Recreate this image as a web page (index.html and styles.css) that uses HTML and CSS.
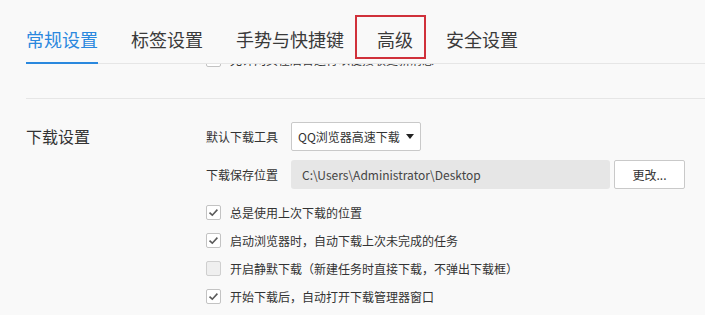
FILE: index.html
```html
<!DOCTYPE html>
<html lang="zh-CN">
<head>
<meta charset="utf-8">
<link rel="stylesheet" href="styles.css">
</head>
<body>
<div class="header">
  <div class="tab active">常规设置</div>
  <div class="tab">标签设置</div>
  <div class="tab">手势与快捷键</div>
  <div class="tab marked">高级</div>
  <div class="tab">安全设置</div>
</div>
<div class="viewport">
  <div class="page">
    <div class="section prev">
      <div class="section-title"></div>
      <div class="section-body">
        <label class="check-row">
          <span class="box"></span>
          <span class="check-text">允许网页在后台运行以便接收更新消息</span>
        </label>
      </div>
    </div>
    <div class="section download">
      <div class="section-title">下载设置</div>
      <div class="section-body">
        <div class="field-row">
          <span class="field-label">默认下载工具</span>
          <div class="select">QQ浏览器高速下载<span class="caret"></span></div>
        </div>
        <div class="field-row">
          <span class="field-label">下载保存位置</span>
          <div class="path">C:\Users\Administrator\Desktop</div>
          <div class="button">更改...</div>
        </div>
        <div class="checks">
          <label class="check-row">
            <span class="box checked"><svg viewBox="0 0 15 15" width="15" height="15"><polyline points="3.5,7.6 6.3,10.2 11.4,4.6" fill="none" stroke="#5a5a5a" stroke-width="1.6"/></svg></span>
            <span class="check-text">总是使用上次下载的位置</span>
          </label>
          <label class="check-row">
            <span class="box checked"><svg viewBox="0 0 15 15" width="15" height="15"><polyline points="3.5,7.6 6.3,10.2 11.4,4.6" fill="none" stroke="#5a5a5a" stroke-width="1.6"/></svg></span>
            <span class="check-text">启动浏览器时，自动下载上次未完成的任务</span>
          </label>
          <label class="check-row">
            <span class="box off"></span>
            <span class="check-text">开启静默下载（新建任务时直接下载，不弹出下载框）</span>
          </label>
          <label class="check-row">
            <span class="box checked"><svg viewBox="0 0 15 15" width="15" height="15"><polyline points="3.5,7.6 6.3,10.2 11.4,4.6" fill="none" stroke="#5a5a5a" stroke-width="1.6"/></svg></span>
            <span class="check-text">开始下载后，自动打开下载管理器窗口</span>
          </label>
        </div>
      </div>
    </div>
  </div>
</div>
</body>
</html>
```

FILE: styles.css
```css
html, body {
  margin: 0;
  padding: 0;
  background: #f9f9f9;
  font-family: "Noto Sans CJK SC", "Microsoft YaHei", sans-serif;
  color: #333;
  overflow: hidden;
}

.header {
  position: relative;
  z-index: 2;
  background: #f9f9f9;
  display: flex;
  align-items: flex-end;
  gap: 33px;
  height: 63px;
  margin-left: 26px;
  border-bottom: 1px solid #e6e6e6;
}

.tab {
  position: relative;
  font-size: 18px;
  line-height: 24px;
  color: #3a3a3a;
  padding-bottom: 11px;
  border-bottom: 2px solid transparent;
  margin-bottom: -1px;
  white-space: nowrap;
}

.tab.active {
  color: #2a88de;
  border-bottom-color: #2a88de;
}

.tab.marked::after {
  content: "";
  position: absolute;
  left: -22px;
  right: -13px;
  top: -12px;
  bottom: 3px;
  border: 2px solid #d0313b;
}

.viewport {
  overflow: hidden;
  height: 251px;
}

.page {
  margin-top: -19px;
}

.section {
  display: flex;
}

.section-title {
  width: 180px;
  flex: none;
  padding-left: 26px;
  font-size: 16px;
  line-height: 29px;
  color: #333;
}

.section-body {
  display: flex;
  flex-direction: column;
}

.prev {
  padding-bottom: 25px;
}

.download {
  margin-left: 26px;
  border-top: 1px solid #e6e6e6;
  padding-top: 23px;
}

.download .section-title {
  padding-left: 0;
}

.field-row {
  display: flex;
  align-items: center;
  height: 29px;
  margin-bottom: 9px;
}

.field-label {
  width: 85px;
  flex: none;
  font-size: 12px;
  color: #333;
}

.select {
  position: relative;
  box-sizing: border-box;
  width: 130px;
  height: 29px;
  background: #fff;
  border: 1px solid #c9c9c9;
  border-radius: 2px;
  font-size: 12px;
  line-height: 27px;
  padding-left: 6px;
  color: #333;
}

.caret {
  position: absolute;
  right: 6px;
  top: 11px;
  width: 0;
  height: 0;
  border-left: 4px solid transparent;
  border-right: 4px solid transparent;
  border-top: 5px solid #222;
}

.path {
  box-sizing: border-box;
  width: 319px;
  height: 29px;
  background: #e6e6e6;
  border-radius: 3px;
  font-size: 12px;
  line-height: 29px;
  padding-left: 11px;
  color: #444;
}

.button {
  box-sizing: border-box;
  margin-left: 4px;
  width: 71px;
  height: 29px;
  background: #fff;
  border: 1px solid #c9c9c9;
  border-radius: 2px;
  font-size: 12px;
  line-height: 27px;
  text-align: center;
  color: #333;
}

.checks {
  display: flex;
  flex-direction: column;
}

.check-row {
  display: flex;
  align-items: center;
  height: 28px;
  gap: 9px;
}

.box {
  box-sizing: border-box;
  width: 15px;
  height: 15px;
  flex: none;
  border: 1px solid #c3c3c3;
  border-radius: 2px;
  background: #fff;
  display: flex;
  align-items: center;
  justify-content: center;
}

.box svg {
  display: block;
  flex: none;
}

.box.off {
  background: #efefef;
  border-color: #cfcfcf;
}

.check-text {
  font-size: 12px;
  color: #333;
  white-space: nowrap;
}
```
